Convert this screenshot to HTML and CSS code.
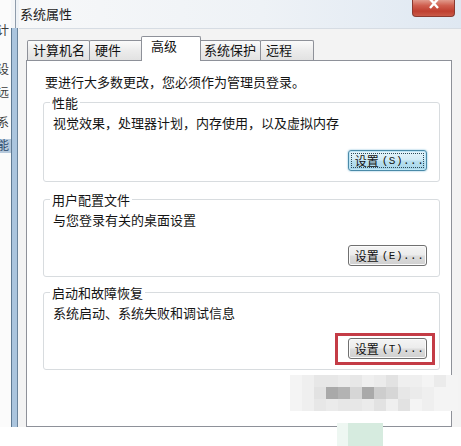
FILE: index.html
```html
<!DOCTYPE html>
<html lang="zh-CN">
<head>
<meta charset="utf-8">
<title>系统属性</title>
<link rel="stylesheet" href="styles.css">
</head>
<body>
<div class="screen">
  <div class="behind">
    <span class="frag f1">计</span>
    <span class="frag f2">设</span>
    <span class="frag f3">远</span>
    <span class="frag f4">系</span>
    <span class="frag f5 sel">能</span>
  </div>
  <div class="frame"></div>
  <div class="dialog">
    <div class="titlebar">
      <span class="title">系统属性</span>
      <span class="close">
        <svg width="12" height="10" viewBox="0 0 12 10"><path d="M2 -1 L10 8 M10 -1 L2 8" stroke="#fff" stroke-width="2.4" fill="none"/></svg>
      </span>
    </div>
    <div class="body">
      <div class="tabs">
        <div class="tab">计算机名</div>
        <div class="tab">硬件</div>
        <div class="tab active">高级</div>
        <div class="tab">系统保护</div>
        <div class="tab">远程</div>
      </div>
      <div class="panel">
        <div class="intro">要进行大多数更改，您必须作为管理员登录。</div>
        <fieldset class="group g1">
          <legend>性能</legend>
          <div class="desc">视觉效果，处理器计划，内存使用，以及虚拟内存</div>
          <div class="actions a1"><button class="btn focus"><span class="zh">设置</span><span class="key">(S)...</span></button></div>
        </fieldset>
        <fieldset class="group g2">
          <legend>用户配置文件</legend>
          <div class="desc">与您登录有关的桌面设置</div>
          <div class="actions"><button class="btn"><span class="zh">设置</span><span class="key">(E)...</span></button></div>
        </fieldset>
        <fieldset class="group g3">
          <legend>启动和故障恢复</legend>
          <div class="desc">系统启动、系统失败和调试信息</div>
          <div class="actions"><button class="btn marked"><span class="zh">设置</span><span class="key">(T)...</span></button></div>
        </fieldset>
      </div>
    </div>
  </div>
</div>
<div class="mosaic">
  <i class="c0"></i><i class="c1"></i><i class="c3"></i><i class="c3"></i><i class="c2"></i><i class="c3"></i><i class="c1"></i><i class="c2"></i><i class="c4"></i><i class="c1"></i><i class="c1"></i><i class="c0"></i><i class="c2"></i><i class="c0"></i>
  <i class="c0"></i><i class="c1"></i><i class="c4"></i><i class="d1"></i><i class="d2"></i><i class="c5"></i><i class="d1"></i><i class="c6"></i><i class="c5"></i><i class="c3"></i><i class="c2"></i><i class="c1"></i><i class="c0"></i><i class="c0"></i>
  <i class="c0"></i><i class="c1"></i><i class="c3"></i><i class="c2"></i><i class="c3"></i><i class="c3"></i><i class="c2"></i><i class="c4"></i><i class="c1"></i><i class="c4"></i><i class="c0"></i><i class="c1"></i><i class="c0"></i><i class="c0"></i>
</div>
<div class="greenmark"><i class="gl"></i><i class="gd"></i></div>
</body>
</html>
```
FILE: styles.css
```css
* { box-sizing: border-box; }
html, body { margin: 0; padding: 0; }
body {
  width: 461px;
  height: 446px;
  background: #fff;
  font-family: "Noto Sans CJK SC", "Microsoft YaHei", sans-serif;
  color: #141414;
  overflow: hidden;
  position: relative;
}
.screen {
  display: flex;
  height: 427px;
  overflow: hidden;
}
.behind {
  width: 11px;
  flex: none;
  background: #fbfbfb;
  overflow: hidden;
  display: flex;
  flex-direction: column;
  font-size: 12px;
  line-height: 12px;
  color: #3a3a3a;
}
.frag { display: block; width: 14px; margin-left: -3px; }
.f1 { margin-top: 24px; }
.f2 { margin-top: 27px; }
.f3 { margin-top: 11px; }
.f4 { margin-top: 18px; }
.f5 { margin-top: 11px; }
.sel { background: #b6c9dc; color: #2c4a6b; height: 14px; }
.frame {
  width: 8px;
  flex: none;
  background:
    linear-gradient(to right, #f4f6f8 0 4px, #8f9cab 4px 5px, #eef2f6 5px) top / 100% 28px no-repeat,
    linear-gradient(to right, #5f7a93 0 1px, #abc5de 1px 6px, #6b849c 6px 7px, #f2f4f6 7px 8px);
}
.dialog {
  flex: 1;
  display: flex;
  flex-direction: column;
  background: #f3f3f3;
}
.titlebar {
  height: 28px;
  flex: none;
  display: flex;
  align-items: flex-start;
  background: linear-gradient(to right, #f7f8f9 0%, #eef2f6 55%, #dfe8f2 100%);
}
.title {
  padding: 5px 0 0 1px;
  font-size: 13px;
  line-height: 17px;
  color: #1c1c1c;
}
.close {
  margin-left: auto;
  margin-right: 6px;
  width: 43px;
  height: 17px;
  border: 1px solid #8a3a30;
  border-top: none;
  border-radius: 0 0 4px 4px;
  background: linear-gradient(#e19a8c 0%, #cf5e4e 35%, #bf3f30 70%, #c95a48 100%);
  display: flex;
  justify-content: center;
  align-items: flex-start;
}
.body {
  flex: 1;
  display: flex;
  flex-direction: column;
  border-top: 1px solid #d6dce3;
  padding: 7px 9px 0 7px;
}
.tabs {
  height: 24px;
  flex: none;
  display: flex;
  align-items: flex-start;
  margin-left: 1px;
}
.tab {
  margin-top: 4px;
  height: 20px;
  min-width: 54px;
  padding: 0 4px 0 5px;
  border: 1px solid #8e9199;
  border-bottom: none;
  border-radius: 2px 2px 0 0;
  background: linear-gradient(#fbfbfb, #ececec 50%, #e2e2e2);
  font-size: 13px;
  line-height: 18px;
  color: #111;
}
.tab + .tab { margin-left: -1px; }
.tab.active {
  margin-top: 0;
  height: 25px;
  min-width: 60px;
  margin-left: -2px;
  margin-right: -2px;
  padding: 0 8px 0 9px;
  background: #fff;
  position: relative;
  z-index: 2;
  line-height: 17px;
}
.panel {
  flex: 1;
  background: #fff;
  border: 1px solid #8e9199;
  padding: 12px 11px 0 16px;
}
.intro {
  margin-left: 2px;
  font-size: 13px;
  line-height: 17px;
}
.group {
  margin: 4px 0 0 0;
  min-width: 0;
  border: 1px solid #d8dcdf;
  border-radius: 3px;
  padding: 3px 12px 10px 9px;
}
.g2 { margin-top: 9px; }
.g3 { margin-top: 7px; }
legend {
  padding: 0 2px;
  margin-left: -3px;
  font-size: 13px;
  line-height: 17px;
}
.desc {
  font-size: 13px;
  line-height: 17px;
}
.actions {
  display: flex;
  justify-content: flex-end;
  margin-top: 17px;
}
.a1 { margin-top: 19px; }
.btn {
  width: 79px;
  height: 21px;
  padding: 0 0 0 4px;
  border: 1px solid #707070;
  border-radius: 3px;
  background: linear-gradient(#f4f4f4 0%, #ececec 48%, #dcdcdc 52%, #d0d0d0 100%);
  box-shadow: inset 0 0 0 1px #fbfbfb;
  display: flex;
  align-items: center;
  justify-content: center;
  font-family: inherit;
  color: #111;
  position: relative;
}
.btn.focus {
  border-color: #4a8aa8;
  background: linear-gradient(#e6f4fa 0%, #d2ebf6 48%, #b8e0f0 52%, #a8d6ea 100%);
  box-shadow: inset 0 0 0 1px #bfe6f6, 0 0 2px #6fb3d3;
  outline: 1px dotted #2c4a58;
  outline-offset: -4px;
}
.zh {
  font-size: 12px;
  line-height: 14px;
}
.key {
  margin-left: 3px;
  font-family: "Liberation Mono", monospace;
  font-size: 11px;
  line-height: 14px;
  letter-spacing: 0.5px;
}
.marked::after {
  content: "";
  position: absolute;
  top: -6px;
  bottom: -7px;
  left: -14px;
  right: -9px;
  border: 3px solid #c43c46;
}
.mosaic {
  position: absolute;
  left: 290px;
  top: 375px;
  width: 168px;
  display: grid;
  grid-template-columns: repeat(14, 12px);
  grid-auto-rows: 12px;
}
.mosaic i { display: block; }
.c0 { background: #f4f4f4; }
.c1 { background: #efefef; }
.c2 { background: #ebebeb; }
.c3 { background: #e7e7e7; }
.c4 { background: #e2e2e2; }
.c5 { background: #d6d6d6; }
.c6 { background: #cdcdcd; }
.d1 { background: #a9a9a9; }
.d2 { background: #b3b3b3; }
.greenmark {
  position: absolute;
  left: 337px;
  top: 423px;
  height: 23px;
  display: flex;
}
.gl { display: block; width: 11px; background: #eef7f2; }
.gd { display: block; width: 35px; background: #d6ebdf; }
```
